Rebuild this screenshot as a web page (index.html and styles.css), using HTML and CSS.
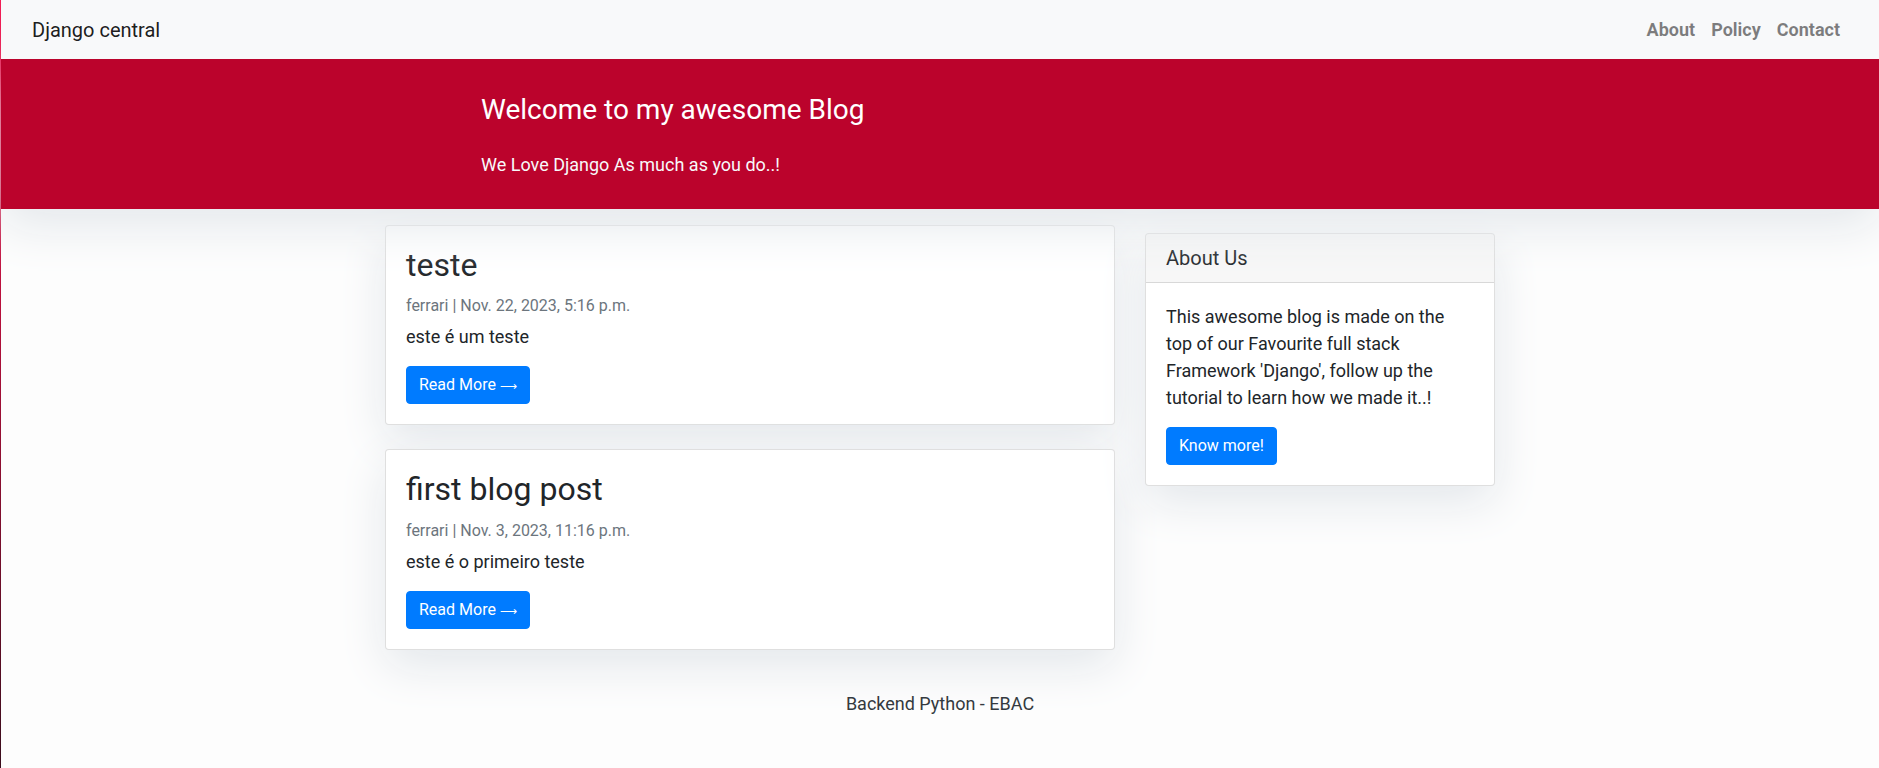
FILE: index.html
```
<!DOCTYPE html>
<html lang="en">
<head>
<meta charset="utf-8">
<title>Django central</title>
<link rel="stylesheet" href="styles.css">
</head>
<body>
<div class="page">
  <nav class="navbar">
    <div class="nav-inner">
      <a class="brand" href="#">Django central</a>
      <ul class="nav-links">
        <li><a class="nav-link" href="#">About</a></li>
        <li><a class="nav-link" href="#">Policy</a></li>
        <li><a class="nav-link" href="#">Contact</a></li>
      </ul>
    </div>
  </nav>

  <header class="masthead">
    <div class="masthead-col">
      <h3 class="site-title">Welcome to my awesome Blog</h3>
      <p class="site-sub">We Love Django As much as you do..!</p>
    </div>
  </header>

  <main class="container">
    <div class="posts">
      <div class="card post">
        <div class="card-body">
          <h2 class="card-title">teste</h2>
          <p class="meta">ferrari | Nov. 22, 2023, 5:16 p.m.</p>
          <p class="card-text">este é um teste</p>
          <a class="btn" href="#">Read More <span class="arrow">⟶</span></a>
        </div>
      </div>
      <div class="card post">
        <div class="card-body">
          <h2 class="card-title">first blog post</h2>
          <p class="meta">ferrari | Nov. 3, 2023, 11:16 p.m.</p>
          <p class="card-text">este é o primeiro teste</p>
          <a class="btn" href="#">Read More <span class="arrow">⟶</span></a>
        </div>
      </div>
    </div>
    <aside class="sidebar">
      <div class="card side">
        <h5 class="card-header">About Us</h5>
        <div class="card-body">
          <p class="card-text">This awesome blog is made on the top of our Favourite full stack Framework 'Django', follow up the tutorial to learn how we made it..!</p>
          <a class="btn" href="#">Know more!</a>
        </div>
      </div>
    </aside>
  </main>

  <footer class="footer">
    <p>Backend Python - EBAC</p>
  </footer>
</div>
</body>
</html>
```
FILE: styles.css
```
* { box-sizing: border-box; }
html, body { margin: 0; padding: 0; }
body {
  font-family: Roboto, "Liberation Sans", sans-serif;
  font-size: 18px;
  line-height: 1.5;
  color: #212529;
  background-color: #fdfdfd;
}
.page {
  min-height: 768px;
  border-left: 1px solid #e8194a;
  border-image: linear-gradient(#f21e55, #b8103c 40%, #3a0d1c) 1;
}
a { text-decoration: none; }

.navbar {
  background: #f8f9fa;
  padding: 8px 16px;
  position: relative;
  z-index: 2;
}
.nav-inner {
  display: flex;
  align-items: center;
  justify-content: space-between;
  padding: 0 15px;
}
.brand {
  font-size: 20px;
  line-height: 30px;
  padding: 5px 0;
  color: rgba(0,0,0,.9);
}
.nav-links {
  list-style: none;
  margin: 0;
  padding: 0;
  display: flex;
}
.nav-link {
  display: block;
  padding: 8px;
  font-weight: 700;
  color: rgba(0,0,0,.5);
  line-height: 27px;
}

.masthead {
  background: #bb032c;
  padding: 18px 0 15px;
  box-shadow: 0 16px 48px #e3e7eb;
  position: relative;
  z-index: 1;
}
.masthead-col {
  width: 920px;
  margin: 0 auto;
  padding-left: 1px;
}
.site-title {
  margin: 16px 0 24px;
  font-size: 28px;
  font-weight: 400;
  line-height: 1.2;
  color: #fff;
}
.site-sub {
  margin: 0 0 16px;
  color: #f8f9fa;
}

.container {
  width: 1110px;
  margin: 0 auto;
  display: flex;
  gap: 30px;
  align-items: flex-start;
}
.posts {
  width: 730px;
  margin-top: 16px;
  display: flex;
  flex-direction: column;
  gap: 24px;
}
.sidebar {
  width: 350px;
  margin-top: 24px;
}
.card {
  background: #fff;
  border: 1px solid rgba(0,0,0,.125);
  border-radius: 4px;
  box-shadow: 0 16px 48px #e3e7eb;
}
.card-body { padding: 20px; }
.card-title {
  margin: 0 0 12px;
  font-size: 32px;
  font-weight: 400;
  line-height: 1.2;
}
.meta {
  margin: 0 0 8px;
  font-size: 16px;
  line-height: 1.2;
  color: #6c757d;
}
.card-text { margin: 0 0 16px; }
.btn {
  display: inline-block;
  background: #007bff;
  border: 1px solid #007bff;
  color: #fff;
  font-size: 16px;
  line-height: 24px;
  padding: 6px 12px;
  border-radius: 4px;
}
.arrow {
  font-family: "DejaVu Sans", sans-serif;
  font-size: 12px;
  line-height: 1;
}
.card-header {
  margin: 0;
  padding: 12px 20px;
  font-size: 20px;
  font-weight: 400;
  line-height: 1.2;
  background: rgba(0,0,0,.03);
  border-bottom: 1px solid rgba(0,0,0,.125);
  border-radius: 3px 3px 0 0;
}

.footer {
  padding: 16px 0;
  margin-top: 24px;
  text-align: center;
}
.footer p {
  margin: 0;
  color: #343a40;
}
```
